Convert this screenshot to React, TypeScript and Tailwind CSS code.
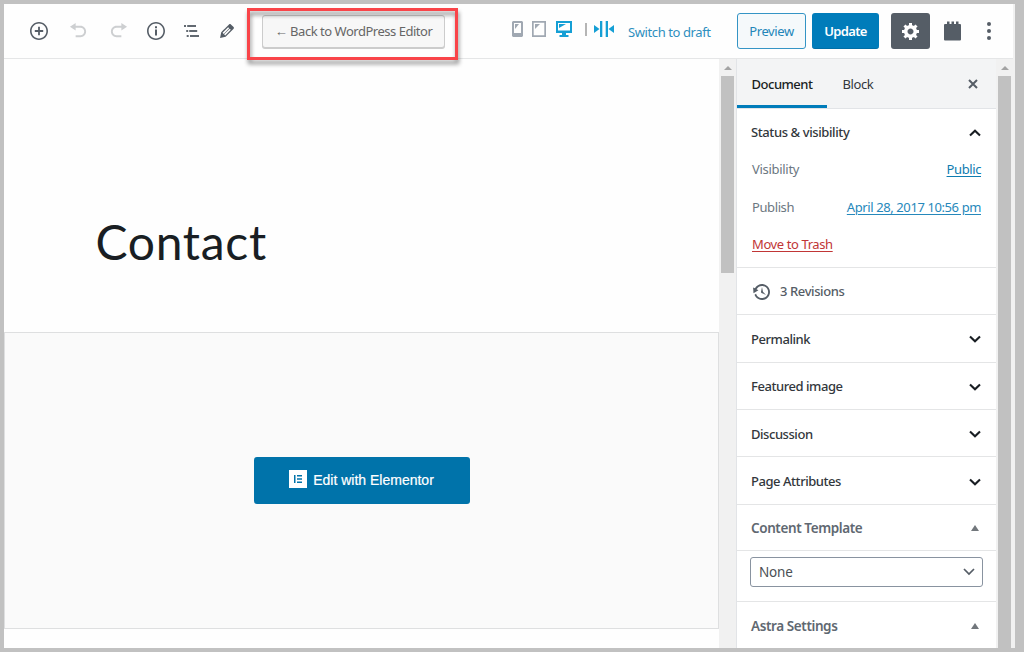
import type { ReactNode } from "react";

function Icon({ d, className }: { d: string; className: string }) {
  return (
    <svg viewBox="0 0 20 20" className={className} fill="currentColor" aria-hidden="true">
      <path d={d} />
    </svg>
  );
}

const INSERT =
  "M10 1c-5 0-9 4-9 9s4 9 9 9 9-4 9-9-4-9-9-9zm0 16.4c-4.1 0-7.4-3.3-7.4-7.4S5.9 2.6 10 2.6s7.4 3.3 7.4 7.4-3.3 7.4-7.4 7.4zm.9-11.6H9.1v3.3H5.8v1.8h3.3v3.3h1.8v-3.3h3.3V9.1h-3.3V5.8z";
const UNDO = "M12 5H7V2L1 6l6 4V7h5c2.2 0 4 1.8 4 4s-1.8 4-4 4H7v2h5c3.3 0 6-2.7 6-6s-2.7-6-6-6z";
const REDO = "M8 5h5V2l6 4-6 4V7H8c-2.2 0-4 1.8-4 4s1.8 4 4 4h5v2H8c-3.3 0-6-2.7-6-6s2.7-6 6-6z";
const INFO =
  "M10 1c-5 0-9 4-9 9s4 9 9 9 9-4 9-9-4-9-9-9zm0 16.4c-4.1 0-7.4-3.3-7.4-7.4S5.9 2.6 10 2.6s7.4 3.3 7.4 7.4-3.3 7.4-7.4 7.4zM9 5.2h2v2H9zM9 8.6h2v6H9z";
const PENCIL =
  "M13.89 3.39l2.71 2.72c.46.46.42 1.24.03 1.64l-8.01 8.02-5.56 1.16 1.16-5.58s7.6-7.63 7.99-8.03c.39-.39 1.22-.39 1.68.07zm-2.73 2.79l-5.59 5.61 1.11 1.11 5.54-5.65zm-2.97 8.23l5.58-5.6-1.07-1.08-5.59 5.6z";
const GEAR =
  "M18 12h-2.18c-.17.7-.44 1.35-.81 1.93l1.54 1.54-2.1 2.1-1.54-1.54c-.58.36-1.23.63-1.91.79V19H8v-2.18c-.68-.16-1.33-.43-1.91-.79l-1.54 1.54-2.12-2.12 1.54-1.54c-.36-.58-.63-1.23-.79-1.91H1V9.03h2.17c.16-.7.44-1.35.8-1.94L2.43 5.55l2.1-2.1 1.54 1.54c.58-.37 1.24-.64 1.93-.81V2h3v2.18c.68.16 1.33.43 1.91.79l1.54-1.54 2.12 2.12-1.54 1.54c.36.59.64 1.24.8 1.94H18V12zm-8.5 1.5c1.66 0 3-1.34 3-3s-1.34-3-3-3-3 1.34-3 3 1.34 3 3 3z";
const HISTORY =
  "M13.65 2.88c3.93 2.01 5.48 6.84 3.47 10.77s-6.83 5.48-10.77 3.47c-1.87-.96-3.2-2.56-3.86-4.4l1.64-1.03c.45 1.57 1.52 2.95 3.08 3.76 3.01 1.54 6.69.35 8.23-2.66 1.55-3.01.36-6.69-2.65-8.24C9.78 3.01 6.1 4.2 4.56 7.21l1.88.97-4.95 3.08-.39-5.82 1.78.91C4.9 2.4 9.75.89 13.65 2.88zm-4.36 7.83C9.11 10.53 9 10.28 9 10c0-.07.03-.12.04-.19h-.01L10 5l.97 4.81L14 13l-4.5-2.12.02-.02c-.08-.04-.16-.09-.23-.15z";

function Chevron({ up = false }: { up?: boolean }) {
  return (
    <svg viewBox="0 0 12 8" className="h-2 w-3" fill="none" stroke="#191e23" strokeWidth="2.1" aria-hidden="true">
      <path d={up ? "M1 6.6 6 1.8l5 4.8" : "M1 1.4l5 4.8 5-4.8"} />
    </svg>
  );
}

function Triangle() {
  return (
    <svg viewBox="0 0 8 6" className="h-1.5 w-2" fill="#72777c" aria-hidden="true">
      <path d="M4 0l4 6H0z" />
    </svg>
  );
}

function Toolbar() {
  return (
    <header className="flex h-[55px] shrink-0 items-start border-b border-[#e5e6e7] bg-[#fefefe] text-[#555d66]">
      <div className="flex h-[53px] items-center pl-[25px]">
        <Icon d={INSERT} className="size-5" />
        <Icon d={UNDO} className="ml-5 size-[19px] text-[#cdcfd1]" />
        <Icon d={REDO} className="ml-[20.5px] size-[19px] text-[#cdcfd1]" />
        <Icon d={INFO} className="ml-[18.5px] size-5" />
        <svg viewBox="0 0 15 12" className="ml-[18px] h-3 w-[15px]" fill="#626971" aria-hidden="true">
          <path d="M0 0h2v2H0zM3.200 0h8.800v2H3.200zM2.200 5h2v2h-2zM5.200 5h8v2h-8zM2.700 10h2v2h-2zM6 10h9v2H6z" />
        </svg>
        <Icon d={PENCIL} className="ml-[18px] size-5" />
      </div>
      <button className="ml-[25px] mt-[11px] flex h-[33px] w-[183px] items-center justify-center rounded-[3px] border border-[#ccc] bg-[#f7f7f7] text-[13px] tracking-[-0.48px] text-[#666] shadow-[0_1px_0_#ccc]">
        ← Back to WordPress Editor
      </button>
      <div className="ml-[67px] mt-[16px] flex h-[18px] items-center">
        <svg viewBox="0 0 11 16" className="h-4 w-[11px]" aria-hidden="true">
          <path fill="#a0a8b2" fillRule="evenodd" d="M1 0h9l1 1v14l-1 1H1l-1-1V1zM2 2v10h7V2z" />
          <path fill="#a0a8b2" d="M3 3h4L3 8z" />
        </svg>
        <svg viewBox="0 0 14 16" className="ml-[9px] h-4 w-3.5" aria-hidden="true">
          <path fill="#a0a8b2" fillRule="evenodd" d="M0 0h14v16H0zM1.7 1.7v12.6h10.6V1.7z" />
          <path fill="#a0a8b2" d="M3 3h5L3 8z" />
        </svg>
        <svg viewBox="0 0 16 16" className="ml-2.5 size-4" aria-hidden="true">
          <path fill="#159fd5" fillRule="evenodd" d="M0 0h16v12h-6v2h2.5v2h-9v-2H6v-2H0zM2 2v7.500h12V2z" />
          <path fill="#159fd5" d="M3 3h7L3 7z" />
        </svg>
        <span className="ml-[13px] mt-px h-[13px] w-0.5 bg-[#b5b5b5]" />
        <svg viewBox="0 0 20 16" className="ml-[7px] h-4 w-5" fill="#159fd5" aria-hidden="true">
          <path d="M0 4l5.5 4L0 12zM6 0h2.300v16H6zM11.700 0H14v16h-2.300zM20 4l-5.500 4 5.500 4z" />
        </svg>
        <a className="ml-3.5 mt-2 w-[95px] whitespace-nowrap text-[13px] tracking-[-0.4px] text-[#2e8fbf]">Switch to draft</a>
      </div>
      <div className="ml-3.5 mt-[9px] flex h-9 items-center">
        <button className="h-9 w-[69px] rounded-[3px] border border-[#3494c5] bg-[#f5f9fb] pt-px text-[13px] tracking-[-0.4px] text-[#2386b9]">
          Preview
        </button>
        <button className="ml-1.5 h-9 w-[67px] rounded-[3px] border-b border-[#006fa7] bg-[#007cba] pt-[3px] text-[13px] font-semibold tracking-[-0.65px] text-white">
          Update
        </button>
        <button className="ml-3 flex h-9 w-[39px] items-center justify-center rounded-[3px] bg-[#555d66] text-white">
          <Icon d={GEAR} className="size-5" />
        </button>
        <svg viewBox="0 0 17 20" className="ml-3.5 h-5 w-[17px]" fill="#555d66" aria-hidden="true">
          <path d="M1 3h2V.5h2.500V3h2V.5H10V3h2V.5h2.500V3H16q1 0 1 1v14.500q0 1-1 1H1q-1 0-1-1V4q0-1 1-1z" />
        </svg>
        <svg viewBox="0 0 4 18" className="ml-[26px] h-[18px] w-1" fill="#555d66" aria-hidden="true">
          <circle cx="2" cy="2" r="2" />
          <circle cx="2" cy="9" r="2" />
          <circle cx="2" cy="16" r="2" />
        </svg>
      </div>
    </header>
  );
}

function Scrollbar({ children }: { children: ReactNode }) {
  return (
    <div className="flex w-[17px] shrink-0 flex-col items-center bg-[#f1f1f1]">
      <div className="flex h-[17px] shrink-0 items-center">
        <svg viewBox="0 0 8 4" className="h-1 w-2" fill="#a3a3a3" aria-hidden="true">
          <path d="M4 0l4 4H0z" />
        </svg>
      </div>
      {children}
    </div>
  );
}

function PanelRow({ label }: { label: string }) {
  return (
    <button className="flex h-[47.4px] shrink-0 items-center justify-between border-b border-[#e4e5e6] pl-3.5 pr-[15px] pt-0.5 text-[13px] font-medium tracking-[-0.45px] text-[#32373c]">
      {label}
      <Chevron />
    </button>
  );
}

function Sidebar() {
  return (
    <aside className="flex w-[260px] shrink-0 flex-col overflow-hidden border-l border-[#e2e4e7] bg-white text-[13px]">
      <div className="flex h-[50px] shrink-0 border-b border-[#e2e4e7] bg-[#f3f4f5] text-[#32373c]">
        <div className="flex w-[90px] items-center justify-center border-b-[3px] border-[#007cba] pt-[5px] font-medium tracking-[-0.5px] text-[#191e23]">
          Document
        </div>
        <div className="flex w-[62px] items-center justify-center pt-0.5 tracking-[-0.4px]">Block</div>
        <svg viewBox="0 0 10 10" className="ml-auto mr-[18px] mt-5 size-2.5" stroke="#555d66" strokeWidth="2" aria-hidden="true">
          <path d="M1 1l8 8M9 1L1 9" />
        </svg>
      </div>
      <section className="flex h-[159.3px] shrink-0 flex-col border-b border-[#e4e5e6] px-[15px] tracking-[-0.4px] text-[#6c7781]">
        <div className="flex h-[48px] items-center justify-between font-medium text-[#32373c]">
          <span className="-ml-px">Status &amp; visibility</span>
          <Chevron up />
        </div>
        <div className="flex h-[26px] items-center justify-between">
          <span className="tracking-[-0.3px]">Visibility</span>
          <a className="text-[#0f7cb0] underline underline-offset-2">Public</a>
        </div>
        <div className="mt-3 flex h-[26px] items-center justify-between">
          Publish
          <a className="text-[#2688bb] underline underline-offset-2">April 28, 2017 10:56 pm</a>
        </div>
        <div className="mt-[11px] flex h-[26px] items-center">
          <a className="text-[#c13636] underline underline-offset-2">Move to Trash</a>
        </div>
      </section>
      <div className="flex h-[47px] shrink-0 items-center border-b border-[#e4e5e6] pl-[15px] pt-px font-medium tracking-[-0.4px] text-[#555d66]">
        <Icon d={HISTORY} className="mr-2 size-5" />3 Revisions
      </div>
      <PanelRow label="Permalink" />
      <PanelRow label="Featured image" />
      <PanelRow label="Discussion" />
      <PanelRow label="Page Attributes" />
      <div className="flex h-[46px] shrink-0 items-center justify-between border-b border-[#e4e5e6] pl-3.5 pr-[17px] pt-px text-[13.5px] font-semibold tracking-[-0.4px] text-[#606871]">
        Content Template
        <Triangle />
      </div>
      <div className="h-[51px] shrink-0 border-b border-[#e4e5e6] px-[13px] pt-1.5">
        <div className="flex h-[30px] items-center justify-between rounded-[3px] border border-[#8993a0] pl-2 pr-[7px] pt-px text-[13.5px] tracking-[-0.2px] text-[#4b5055]">
          None
          <svg viewBox="0 0 12 8" className="h-2 w-3" fill="none" stroke="#555d66" strokeWidth="1.7" aria-hidden="true">
            <path d="M1 1l5 5 5-5" />
          </svg>
        </div>
      </div>
      <div className="flex h-[49px] shrink-0 items-center justify-between pl-3.5 pr-[17px] text-[13.5px] font-semibold tracking-[-0.4px] text-[#606871]">
        Astra Settings
        <Triangle />
      </div>
    </aside>
  );
}

function Canvas() {
  return (
    <main className="flex w-[715px] shrink-0 flex-col bg-[#fefefe]">
      <div className="h-[273px] shrink-0 pl-[91.5px] pt-[148px]">
        <h1 className="font-[Lato] text-[48px] leading-[70px] tracking-[0.7px] text-[#191e23]">Contact</h1>
      </div>
      <div className="flex h-[297px] shrink-0 justify-center border border-[#dedfe0] bg-[#fafafa] pt-[124.4px]">
        <button className="flex h-[47px] w-[216px] items-center justify-center rounded-[3px] bg-[#0073aa] pb-[3px] font-['Liberation_Sans'] text-[14px] text-white [-webkit-text-stroke:0.2px_white]">
          <svg viewBox="0 0 18 18" className="mr-1.5 size-[18px]" aria-hidden="true">
            <path fill="#fff" d="M0 0h18v18H0z" />
            <path fill="#0073aa" d="M5 5h1.500v8H5zM8 5h5v1.500H8zM8 8.200h5v1.500H8zM8 11.500h5V13H8z" />
          </svg>
          <span className="pt-0.5">Edit with Elementor</span>
        </button>
      </div>
    </main>
  );
}

export default function App() {
  return (
    <div className="flex h-[652px] w-[1024px] overflow-hidden bg-[#c1c1c1] py-1 pl-1 font-['Noto_Sans','Open_Sans',sans-serif]">
      <div className="relative flex w-[1011px] flex-col overflow-hidden border-r-2 border-[#f1f1f1] bg-white">
        <Toolbar />
        <div className="flex min-h-0 flex-1">
          <Canvas />
          <Scrollbar>
            <div className="h-[197px] w-[13px] bg-[#c1c1c1]" />
          </Scrollbar>
          <Sidebar />
          <Scrollbar>
            <div className="w-[13px] flex-1 bg-[#c1c1c1]" />
          </Scrollbar>
        </div>
        <div className="pointer-events-none absolute left-[243px] top-1 h-[52px] w-[211px] border-[3px] border-[#f94449] drop-shadow-[1px_4px_2px_rgba(0,0,0,0.45)]" />
      </div>
    </div>
  );
}
